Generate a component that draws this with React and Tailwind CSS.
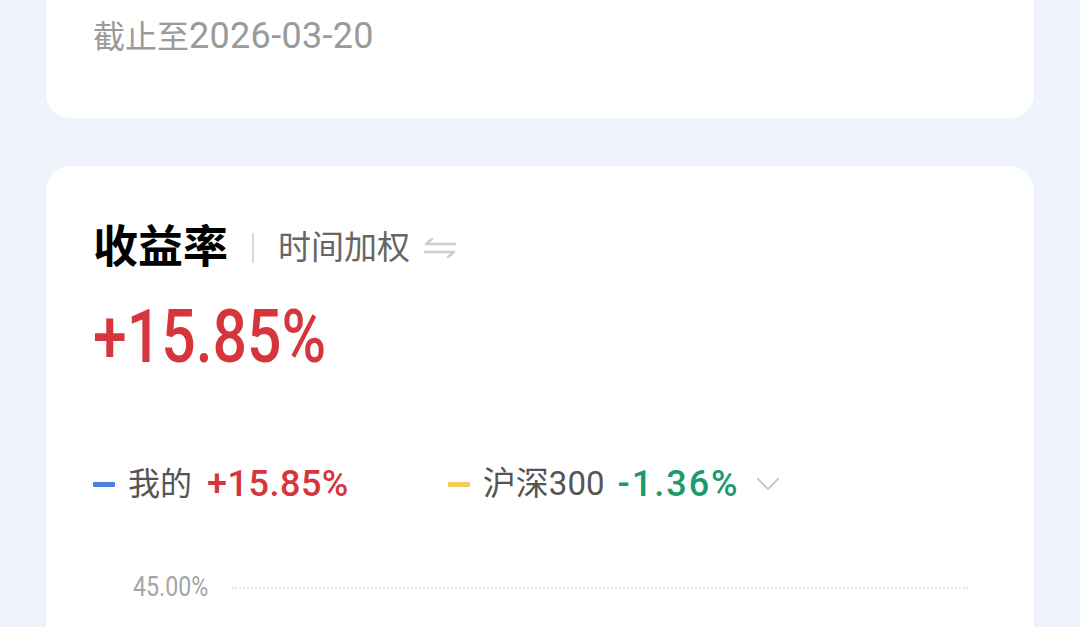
import React from 'react';

const cjk = { fontFamily: 'Roboto, "Noto Sans CJK SC", sans-serif' };

const SwapIcon = () => (
  <svg width="34" height="22" viewBox="0 0 34 22" fill="none" stroke="#cfcfcf" strokeWidth="2.5" strokeLinecap="round" strokeLinejoin="round">
    <path d="M32 7H3L9 2" />
    <path d="M2 15H31L25 20" />
  </svg>
);

const Chevron = () => (
  <svg width="24" height="16" viewBox="0 0 24 16" fill="none" stroke="#cccccc" strokeWidth="2" strokeLinecap="round" strokeLinejoin="round">
    <path d="M2 3L12 13L22 3" />
  </svg>
);

export default function App() {
  return (
    <div className="w-[1080px] h-[627px] overflow-hidden bg-[#eff3fc] px-[46px]" style={cjk}>
      {/* summary card (continues above the viewport) */}
      <div className="h-[118px] bg-white rounded-b-[24px] pt-[20px] pl-[47px]">
        <div className="flex items-baseline leading-[32px] text-[#9a9a9a]">
          <span className="text-[32px]">截止至</span>
          <span className="text-[36px] tracking-[0.3px]">2026-03-20</span>
        </div>
      </div>

      {/* return rate card */}
      <div className="mt-[48px] bg-white rounded-[24px] pt-[60px] pl-[47px] h-[600px]">
        <div className="flex items-center h-[44px]">
          <span className="text-[45px] leading-[44px] font-bold text-black">收益率</span>
          <span className="ml-[24px] w-[2px] h-[30px] bg-[#d9d9d9]" />
          <span className="ml-[24px] text-[33px] leading-[44px] text-[#666666]">时间加权</span>
          <span className="ml-[13px] flex items-center"><SwapIcon /></span>
        </div>

        <div className="mt-[31px] h-[72px]">
          <span className="inline-block origin-left scale-x-[0.82] text-[74px] leading-[72px] font-medium text-[#d7353c]">+15.85%</span>
        </div>

        <div className="mt-[91px] flex items-center h-[40px]">
          <span className="w-[22px] h-[5px] bg-[#4a80e4] rounded-[1px]" />
          <span className="ml-[13px] text-[32px] text-[#555555]">我的</span>
          <span className="ml-[15px] text-[36px] font-medium text-[#d7353c] tracking-[0.5px]">+15.85%</span>
          <span className="ml-[99px] w-[22px] h-[5px] bg-[#f3cc5c] rounded-[1px]" />
          <span className="ml-[13px] text-[33px] text-[#555555]">沪深300</span>
          <span className="ml-[13px] text-[36px] font-medium text-[#1a9a6e] tracking-[2px]">-1.36%</span>
          <span className="ml-[16px] flex items-center"><Chevron /></span>
        </div>

        <div className="mt-[70px] flex items-center h-[28px] pl-[40px]">
          <span className="w-[75px]">
            <span className="inline-block origin-left scale-x-[0.86] text-[27px] leading-[28px] text-[#a5a5a5]">45.00%</span>
          </span>
          <span className="ml-[24px] w-[736px] border-t-2 border-dotted border-[#e6e6e6]" />
        </div>
      </div>
    </div>
  );
}
